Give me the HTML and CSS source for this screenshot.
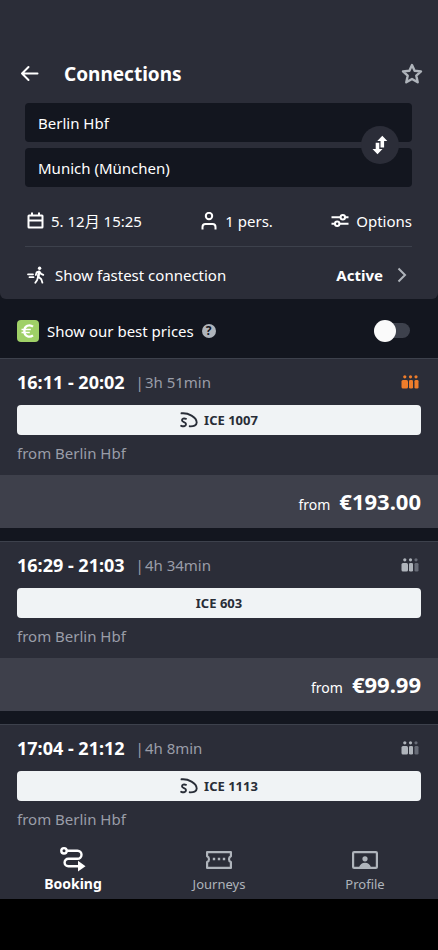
FILE: index.html
```html
<!DOCTYPE html>
<html lang="en">
<head>
<meta charset="utf-8">
<meta name="viewport" content="width=device-width, initial-scale=1">
<title>Connections</title>
<link rel="stylesheet" href="styles.css">
</head>
<body>
<div class="app">
  <header class="search">
    <div class="titlebar">
      <button class="icon-button" type="button" aria-label="Back">
        <svg width="20" height="20" viewBox="0 0 20 20" fill="none" stroke="#fff" stroke-width="2" stroke-linecap="round" stroke-linejoin="round"><path d="M17.500 9.500H2M8.500 3L2 9.500 8.500 16"/></svg>
      </button>
      <h1 class="title">Connections</h1>
      <button class="icon-button" type="button" aria-label="Favourite">
        <svg width="22" height="22" viewBox="0 0 22 22" fill="none" stroke="#afb4bb" stroke-width="2.400" stroke-linejoin="round"><path d="M11 2l2.600 5.700 6.400.7-4.700 4.300 1.400 6.600L11 16l-5.700 3.300 1.400-6.600L2 8.400l6.400-.7z"/></svg>
      </button>
    </div>
    <div class="search-body">
      <div class="stations">
        <input class="station" type="text" value="Berlin Hbf" aria-label="From">
        <input class="station" type="text" value="Munich (München)" aria-label="To">
        <button class="swap" type="button" aria-label="Swap stations">
          <svg width="16" height="20" viewBox="0 0 16 20" fill="#fff"><path d="M10.300.8l5 5.200h-3.200v6.500H8.500V6H5.300z"/><path d="M5.500 19.200l-5-5.200h3.200V7.700H7.300V14h3.200z"/></svg>
        </button>
      </div>
      <div class="filters">
        <button class="filter" type="button">
          <svg width="18" height="18" viewBox="0 0 18 18" fill="none" stroke="#fff" stroke-width="2"><rect x="2.500" y="3.500" width="14" height="12" rx=".5"/><path d="M2.500 8.500h14M6 .5v3M13 .5v3"/></svg>
          5. 12月 15:25
        </button>
        <button class="filter" type="button">
          <svg width="18" height="18" viewBox="0 0 18 18" fill="none" stroke="#fff" stroke-width="2"><circle cx="9" cy="4" r="3.200"/><path d="M2.500 17.500V15c0-2 1-3 3-3h7c2 0 3 1 3 3v2.500"/></svg>
          1 pers.
        </button>
        <button class="filter" type="button">
          <svg width="18" height="18" viewBox="0 0 18 18" fill="none" stroke="#fff" stroke-width="2"><path d="M.5 5.200h9M14 5.200h3.500M.5 11.800H4M8.500 11.800h9"/><circle cx="11.800" cy="5.200" r="2.200"/><circle cx="6.200" cy="11.800" r="2.200"/></svg>
          Options
        </button>
      </div>
      <button class="fastest" type="button">
        <svg width="18" height="18" viewBox="0 0 18 18" fill="none" stroke="#fff" stroke-width="1.800" stroke-linecap="round" stroke-linejoin="round"><path d="M1 8.300h5M2.500 11.200h4"/><circle cx="12.600" cy="2.200" r="1.700" fill="#fff" stroke="none"/><path d="M8.800 9l.8-2.600 2.600-1.100 1.900 2.600 2.200 1M12.200 5.800l-.8 5 2.900 2.400 1.100 3.500M10.800 11.500l-.6 2.400-1.900 2.800"/><path d="M12 6.200l-.8 4" stroke-width="2.400"/></svg>
        <span class="fastest-text">Show fastest connection</span>
        <strong>Active</strong>
        <svg class="chevron" width="10" height="16" viewBox="0 0 10 16" fill="none" stroke="#afb4bb" stroke-width="2"><path d="M1.500 1.500L8 8l-6.500 6.500"/></svg>
      </button>
    </div>
  </header>

  <div class="prices">
    <svg width="22" height="22" viewBox="0 0 22 22"><rect width="22" height="22" rx="4" fill="#9fd067"/><path d="M16 6.600C12.500 4 7.300 5.500 7.300 11S12.500 18 16 15.400" fill="none" stroke="#fff" stroke-width="2.300"/><path d="M4.500 9.500h9.300M4.500 12.500h8.300" fill="none" stroke="#fff" stroke-width="1.600"/></svg>
    <label for="best-prices">Show our best prices</label>
    <button class="help" type="button" aria-label="Help">?</button>
    <input class="toggle" id="best-prices" type="checkbox">
  </div>

  <main class="results">
    <article class="card">
      <div class="info">
        <div class="times">
          <strong>16:11 - 20:02</strong>
          <span class="duration"><span>|</span>3h 51min</span>
          <svg class="load high" width="18" height="14" viewBox="0 0 18 14"><circle cx="3.800" cy="1.800" r="1.600"/><circle cx="9.500" cy="1.800" r="1.600"/><circle cx="15" cy="1.800" r="1.600"/><rect x="0.500" y="5" width="6.500" height="8.500" rx="1.500"/><rect x="8" y="5" width="4" height="8.500" rx="1.300"/><rect x="13.500" y="5" width="4" height="8.500" rx="1.300"/></svg>
        </div>
        <div class="train">
          <svg width="18" height="16" viewBox="0 0 18 16" fill="none" stroke="#282d37" stroke-width="1.900" stroke-linecap="round"><path d="M1.500 1.300C8 .6 16.700 5 16.700 10.500c0 3-3.200 4-7 3.800"/><path d="M6 6.800C3.800 6 2 6.600 2 8.300c0 2.200 4 1.300 4 3.700 0 2.200-2.500 2.700-4.800 1.800"/></svg>
          ICE 1007
        </div>
        <div class="origin">from Berlin Hbf</div>
      </div>
      <div class="fare">from <strong>€193.00</strong></div>
    </article>

    <article class="card">
      <div class="info">
        <div class="times">
          <strong>16:29 - 21:03</strong>
          <span class="duration"><span>|</span>4h 34min</span>
          <svg class="load" width="18" height="14" viewBox="0 0 18 14"><circle cx="3.800" cy="1.800" r="1.600"/><circle cx="9.500" cy="1.800" r="1.600"/><rect x="0.500" y="5" width="6.500" height="8.500" rx="1.500"/><rect x="8" y="5" width="4" height="8.500" rx="1.300"/><g class="free"><circle cx="15" cy="1.800" r="1.600"/><rect x="13.500" y="5" width="4" height="8.500" rx="1.300"/></g></svg>
        </div>
        <div class="train">ICE 603</div>
        <div class="origin">from Berlin Hbf</div>
      </div>
      <div class="fare">from <strong>€99.99</strong></div>
    </article>

    <article class="card">
      <div class="info">
        <div class="times">
          <strong>17:04 - 21:12</strong>
          <span class="duration"><span>|</span>4h 8min</span>
          <svg class="load" width="18" height="14" viewBox="0 0 18 14"><circle cx="3.800" cy="1.800" r="1.600"/><circle cx="9.500" cy="1.800" r="1.600"/><rect x="0.500" y="5" width="6.500" height="8.500" rx="1.500"/><rect x="8" y="5" width="4" height="8.500" rx="1.300"/><g class="free"><circle cx="15" cy="1.800" r="1.600"/><rect x="13.500" y="5" width="4" height="8.500" rx="1.300"/></g></svg>
        </div>
        <div class="train">
          <svg width="18" height="16" viewBox="0 0 18 16" fill="none" stroke="#282d37" stroke-width="1.900" stroke-linecap="round"><path d="M1.500 1.300C8 .6 16.700 5 16.700 10.500c0 3-3.200 4-7 3.800"/><path d="M6 6.800C3.800 6 2 6.600 2 8.300c0 2.200 4 1.300 4 3.700 0 2.200-2.500 2.700-4.800 1.800"/></svg>
          ICE 1113
        </div>
        <div class="origin">from Berlin Hbf</div>
      </div>
    </article>
  </main>

  <nav class="tabs">
    <a class="tab current" href="#booking" aria-current="page">
      <svg width="28" height="26" viewBox="0 0 28 26" fill="none" stroke="currentColor" stroke-width="2.400"><circle cx="5" cy="4.800" r="2.700"/><path d="M8 4.800h10.500a4 4 0 0 1 0 8H9.300a3.700 3.700 0 0 0 0 7.400H20"/><path d="M19 14.800l7.500 5.400-7.500 5.300z" fill="currentColor" stroke="none"/></svg>
      Booking
    </a>
    <a class="tab" href="#journeys">
      <svg width="28" height="26" viewBox="0 0 28 26" fill="none" stroke="currentColor" stroke-width="2.200"><path d="M2.100 6.100h23.800v4.200c-1.300.6-1.900 1.600-1.900 2.900s.6 2.300 1.900 2.900v5.800H2.100v-5.800c1.300-.6 1.900-1.600 1.900-2.900s-.6-2.300-1.900-2.900z" stroke-linejoin="round"/><path d="M7.800 13h2.400M12.800 13h2.400M17.800 13h2.400" stroke-width="2.400"/></svg>
      Journeys
    </a>
    <a class="tab" href="#profile">
      <svg width="28" height="26" viewBox="0 0 28 26" fill="none" stroke="currentColor" stroke-width="2.200"><rect x="2.100" y="6.100" width="23.800" height="15.800" rx="1"/><circle cx="14" cy="12.800" r="2.600" fill="currentColor" stroke="none"/><path d="M8 21.500c.8-3.300 3-4.800 6-4.800s5.200 1.500 6 4.800z" fill="currentColor" stroke="none"/></svg>
      Profile
    </a>
  </nav>
</div>
</body>
</html>
```
FILE: styles.css
```css
* {
  box-sizing: border-box;
}

body {
  margin: 0;
  background: #000;
  color: #fff;
  font: 15px/20px "Noto Sans", "Noto Sans CJK JP", sans-serif;
}

button,
input {
  margin: 0;
  padding: 0;
  border: 0;
  background: none;
  color: inherit;
  font: inherit;
}

svg {
  display: block;
  flex: none;
}

.app {
  background: #13161f;
}

.search {
  padding-top: 60px;
  background: #2b2d38;
  border-radius: 0 0 6px 6px;
}

.titlebar {
  display: flex;
  align-items: center;
  height: 28px;
  padding: 0 15px 0 20px;
}

.title {
  flex: 1;
  margin: 0 0 0 24px;
  font-size: 19px;
  line-height: 28px;
}

.search-body {
  padding: 15px 26px 0 25px;
}

.stations {
  position: relative;
  display: grid;
  gap: 6px;
}

.station {
  width: 100%;
  height: 39px;
  padding: 0 13px;
  border-radius: 4px;
  background: #13161f;
}

.swap {
  position: absolute;
  top: 50%;
  right: 13px;
  display: grid;
  place-items: center;
  width: 38px;
  height: 38px;
  margin-top: -19px;
  border-radius: 50%;
  background: #2b2d38;
}

.filters {
  display: flex;
  justify-content: space-between;
  padding: 24px 0 15px 1px;
  border-bottom: 1px solid #3d414c;
}

.filter {
  display: flex;
  align-items: center;
  gap: 7px;
}

.fastest {
  display: flex;
  align-items: center;
  width: 100%;
  height: 52px;
  padding: 4px 5px 0 2px;
  text-align: left;
}

.fastest-text {
  flex: 1;
  margin-left: 10px;
}

.chevron {
  margin-left: 14px;
}

.prices {
  display: flex;
  align-items: center;
  gap: 8px;
  height: 59px;
  padding: 4px 28px 0 17px;
}

.help {
  width: 14px;
  height: 14px;
  border-radius: 50%;
  background: #afb4bb;
  color: #13161f;
  font-size: 12px;
  font-weight: 700;
  line-height: 14px;
}

.toggle {
  appearance: none;
  display: flex;
  align-items: center;
  width: 36px;
  height: 15px;
  margin-left: auto;
  border-radius: 8px;
  background: #3d414c;
}

.toggle::before {
  content: "";
  width: 22px;
  height: 22px;
  flex: none;
  border-radius: 50%;
  background: #fafafa;
}

.toggle:checked {
  justify-content: flex-end;
}

.results {
  display: grid;
  gap: 13px;
}

.card {
  border-top: 1px solid #3d414c;
  background: #2b2d38;
}

.info {
  padding: 13px 17px 12px;
}

.times {
  display: flex;
  align-items: center;
  padding-right: 2px;
}

.times strong {
  font-size: 18px;
}

.duration {
  display: flex;
  gap: 1px;
  margin-left: 11px;
  color: #9a9da8;
}

.load {
  margin-left: auto;
  fill: #afb4bb;
}

.load.high {
  fill: #ef7d2b;
}

.free {
  fill: #676b76;
}

.train {
  display: flex;
  align-items: center;
  justify-content: center;
  gap: 6px;
  height: 30px;
  margin: 13px 0 8px;
  border-radius: 4px;
  background: #f0f3f5;
  color: #282d37;
  font-size: 13px;
  font-weight: 700;
}

.origin {
  color: #9a9da8;
}

.fare {
  display: flex;
  align-items: baseline;
  justify-content: flex-end;
  gap: 9px;
  height: 53px;
  padding: 12px 17px 0;
  background: #3e404b;
  font-size: 14px;
  line-height: 28px;
}

.fare strong {
  font-size: 22px;
}

.tabs {
  display: grid;
  grid-template-columns: repeat(3, 1fr);
  height: 58px;
  background: #2b2d38;
}

.tab {
  display: flex;
  flex-direction: column;
  align-items: center;
  padding-top: 5px;
  color: #afb4bb;
  font-size: 13px;
  line-height: 24px;
  text-decoration: none;
}

.tab.current {
  color: #fff;
  font-size: 14px;
  font-weight: 700;
}
```
